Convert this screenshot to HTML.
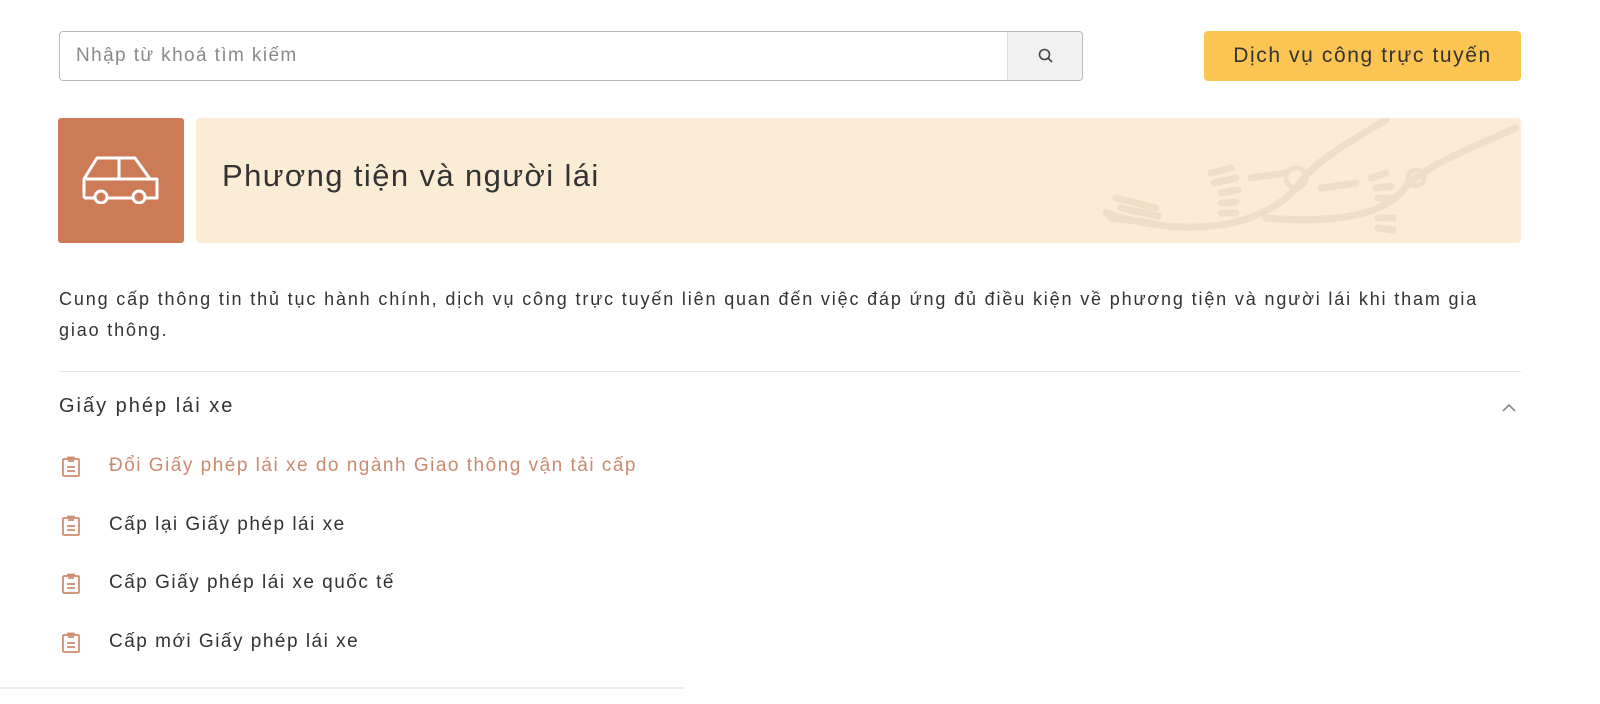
<!DOCTYPE html>
<html><head><meta charset="utf-8"><style>
*{box-sizing:border-box;margin:0;padding:0}
body{width:1600px;height:704px;background:#fff;font-family:"Liberation Sans","DejaVu Sans",sans-serif;color:#333;position:relative;overflow:hidden}
.abs{position:absolute}
.search{left:59px;top:31px;width:1024px;height:50px;border:1px solid #b8b8b8;border-radius:4px;overflow:hidden}
.search .ph{position:absolute;left:16px;top:13px;font-size:19px;color:#8a8a8a;letter-spacing:1.4px}
.search .btn{position:absolute;right:0;top:0;width:75px;height:48px;background:#f1f1f1;border-left:1px solid #ddd}
.yb{left:1204px;top:31px;width:317px;height:50px;background:#fcc450;border-radius:4px;font-size:21px;color:#333;text-align:center;line-height:50px;letter-spacing:1.6px}
.car{left:58px;top:118px;width:126px;height:125px;background:#cd7a57;border-radius:3px}
.ban{left:196px;top:118px;width:1325px;height:125px;background:#fbecd6;border-radius:4px;overflow:hidden}
.ban .t{position:absolute;left:26px;top:40px;font-size:31px;color:#333;letter-spacing:1.4px}
.desc{left:59px;top:284px;width:1480px;font-size:18px;line-height:31px;color:#333;letter-spacing:1.85px;white-space:nowrap}
.hr{left:59px;top:371px;width:1462px;height:1px;background:#e6e6e6}
.h{left:59px;top:395px;font-size:20px;color:#333;letter-spacing:2px}
.it{left:109px;font-size:19px;color:#333;letter-spacing:1.5px}
.ic{left:61px}
</style></head><body>
<div class="abs search"><div class="ph">Nhập từ khoá tìm kiếm</div><div class="btn"><svg style="position:absolute;left:29px;top:15px" width="18" height="18" viewBox="0 0 18 18" fill="none" stroke="#444" stroke-width="1.6"><circle cx="7.5" cy="7.5" r="5"/><path d="M11 11l4 4"/></svg></div></div>
<div class="abs yb">Dịch vụ công trực tuyến</div>
<div class="abs car"><svg style="position:absolute;left:24px;top:34px" width="78" height="52" viewBox="0 0 78 52" fill="none" stroke="#fff" stroke-width="3" stroke-linejoin="round"><path d="M2 46V27L15 6h38l15 21h7v19h-12M25 46h26M13 46H2"/><path d="M4 27h71M37 6v21"/><circle cx="19" cy="45" r="6"/><circle cx="57" cy="45" r="6"/></svg></div>
<div class="abs ban"><div class="t">Phương tiện và người lái</div>
<svg style="position:absolute;left:900px;top:0" width="425" height="125" viewBox="0 0 425 125" fill="none" stroke="#efdfc8" stroke-width="7" stroke-linecap="round"><path d="M10 95C80 118 160 115 200 70C215 50 225 40 290 2"/><path d="M170 100C230 105 290 100 310 68C330 50 350 40 420 10"/><circle cx="200" cy="60" r="10" stroke-width="5"/><circle cx="320" cy="60" r="8" stroke-width="5"/><path d="M20 80L60 90M25 90L62 98M15 100L55 105M115 55L135 50M118 65L140 60M125 75L142 72M125 85L140 84M125 95L140 95M275 60L290 55M280 70L295 68M282 80L297 80M282 100L297 100M282 110L297 112M155 60L190 55M225 70L260 65"/></svg></div>
<div class="abs desc">Cung cấp thông tin thủ tục hành chính, dịch vụ công trực tuyến liên quan đến việc đáp ứng đủ điều kiện về phương tiện và người lái khi tham gia<br>giao thông.</div>
<div class="abs hr"></div>
<div class="abs h">Giấy phép lái xe</div>
<svg class="abs" style="left:1501px;top:403px" width="16" height="10" viewBox="0 0 16 10" fill="none" stroke="#888" stroke-width="1.6"><path d="M2 8l6-6 6 6"/></svg>
<svg class="abs ic" style="top:456px" width="20" height="22" viewBox="0 0 20 22" fill="none" stroke="#cd8a6d" stroke-width="1.7"><rect x="2" y="3" width="16" height="17" rx="1"/><path d="M7 3V1.5h6V3M7 5h6M6 11h8M6 15h8"/></svg>
<div class="abs it" style="top:455px;color:#c98a6d">Đổi Giấy phép lái xe do ngành Giao thông vận tải cấp</div>
<svg class="abs ic" style="top:515px" width="20" height="22" viewBox="0 0 20 22" fill="none" stroke="#cd8a6d" stroke-width="1.7"><rect x="2" y="3" width="16" height="17" rx="1"/><path d="M7 3V1.5h6V3M7 5h6M6 11h8M6 15h8"/></svg>
<div class="abs it" style="top:514px">Cấp lại Giấy phép lái xe</div>
<svg class="abs ic" style="top:573px" width="20" height="22" viewBox="0 0 20 22" fill="none" stroke="#cd8a6d" stroke-width="1.7"><rect x="2" y="3" width="16" height="17" rx="1"/><path d="M7 3V1.5h6V3M7 5h6M6 11h8M6 15h8"/></svg>
<div class="abs it" style="top:572px">Cấp Giấy phép lái xe quốc tế</div>
<svg class="abs ic" style="top:632px" width="20" height="22" viewBox="0 0 20 22" fill="none" stroke="#cd8a6d" stroke-width="1.7"><rect x="2" y="3" width="16" height="17" rx="1"/><path d="M7 3V1.5h6V3M7 5h6M6 11h8M6 15h8"/></svg>
<div class="abs it" style="top:631px">Cấp mới Giấy phép lái xe</div>
<div class="abs" style="left:0;top:687px;width:685px;height:2px;background:#eee"></div>
</body></html>
